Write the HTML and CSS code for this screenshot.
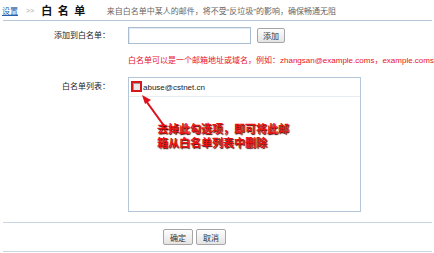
FILE: index.html
```html
<!DOCTYPE html>
<html lang="zh-CN">
<head>
    <meta charset="UTF-8">
    <title>白名单</title>
    <link rel="stylesheet" href="styles.css">
</head>
<body>
    <div class="crumb">
        <a href="#" class="crumb-link">设置</a>
        <span class="crumb-sep">&gt;&gt;</span>
        <h2 class="crumb-title">白名单</h2>
        <span class="crumb-desc">来自白名单中某人的邮件，将不受“反垃圾”的影响，确保畅通无阻</span>
    </div>

    <form class="wl-form">
        <label class="wl-label" for="addr">添加到白名单：</label>
        <div class="wl-field add-row">
            <input type="text" id="addr" class="wl-input">
            <button type="button" class="btn">添加</button>
        </div>

        <div class="wl-field hint">白名单可以是一个邮箱地址或域名，例如：zhangsan@example.coms，example.coms</div>

        <div class="wl-label list-label">白名单列表：</div>
        <div class="wl-field listbox">
            <div class="list-item">
                <span class="chk"></span>
                <span class="addr">abuse@cstnet.cn</span>
            </div>
            <span class="mark"></span>
            <svg class="arrow" width="40" height="50" viewBox="0 0 40 50">
                <line x1="27" y1="37" x2="6" y2="8" stroke="#5a0000" stroke-width="2" opacity="0.35" transform="translate(1 1)"/>
                <line x1="27" y1="37" x2="6" y2="8" stroke="#e0101a" stroke-width="1.8"/>
                <polygon points="2,2 11,7 5,11" fill="#e0101a"/>
            </svg>
            <p class="note">去掉此勾选项，即可将此邮<br>箱从白名单列表中删除</p>
        </div>
    </form>

    <div class="actions">
        <button type="button" class="btn">确定</button>
        <button type="button" class="btn">取消</button>
    </div>
</body>
</html>
```

FILE: styles.css
```css
body {
    margin: 0;
    background: #fff;
    font-family: "Liberation Sans", "Noto Sans CJK SC", sans-serif;
    font-size: 8px;
    color: #333;
}
.crumb {
    display: flex;
    align-items: center;
    height: 20px;
    margin: 0 2px 0 3px;
    border-bottom: 1px solid #b6c8d8;
    white-space: nowrap;
}
.crumb-link {
    color: #2560b0;
    text-decoration: underline;
    margin-left: -1px;
}
.crumb-sep {
    color: #9aa;
    margin-left: 8px;
    font-size: 7px;
}
.crumb-title {
    margin: 0 0 0 7px;
    font-size: 11px;
    font-weight: bold;
    letter-spacing: 5.5px;
    color: #111;
}
.crumb-desc {
    margin-left: 16px;
    color: #666;
}
.wl-form {
    display: grid;
    grid-template-columns: 110px 1fr;
    column-gap: 18px;
    padding-top: 6px;
}
.wl-label {
    text-align: right;
    color: #222;
    line-height: 12px;
}
.wl-label[for] {
    padding-top: 3px;
}
.list-label {
    padding-top: 4px;
    margin-top: 10px;
}
.wl-field {
    grid-column: 2;
}
.add-row {
    display: flex;
    align-items: center;
    gap: 6px;
}
.wl-input {
    box-sizing: border-box;
    width: 123px;
    height: 17px;
    margin: 0;
    border: 1px solid #a9bdd0;
    box-shadow: inset 1px 1px 1px #e4eaf0;
}
.btn {
    box-sizing: border-box;
    height: 15px;
    padding: 0 5px;
    margin: 0;
    border: 1px solid #a6a6a6;
    border-radius: 2px;
    background: linear-gradient(#fdfdfd, #e4e4e4);
    font-family: "Noto Sans CJK SC", sans-serif;
    font-size: 8px;
    line-height: 13px;
    color: #333;
}
.hint {
    margin-top: 11px;
    line-height: 12px;
    color: #e8121e;
    white-space: nowrap;
}
.listbox {
    position: relative;
    box-sizing: border-box;
    width: 233px;
    height: 135px;
    margin-top: 10px;
    border: 1px solid #b4c6d8;
}
.list-item {
    display: flex;
    align-items: center;
    height: 18px;
    padding-left: 4px;
    border-bottom: 1px solid #e6ecf1;
}
.chk {
    box-sizing: border-box;
    width: 8px;
    height: 8px;
    border: 1px solid #9a9a9a;
    background: #e9e9e9;
}
.addr {
    margin-left: 2px;
    color: #222;
}
.mark {
    position: absolute;
    left: 2px;
    top: 3px;
    width: 11px;
    height: 11px;
    box-sizing: border-box;
    border: 2px solid #d8141c;
}
.arrow {
    position: absolute;
    left: 11px;
    top: 15px;
}
.note {
    position: absolute;
    left: 28px;
    top: 44px;
    margin: 0;
    font-size: 11px;
    font-weight: bold;
    line-height: 14px;
    color: #ee1111;
    text-shadow: 1px 1px 1px #4a0000;
    white-space: nowrap;
}
.actions {
    display: flex;
    justify-content: flex-start;
    gap: 3px;
    margin: 10px 2px 0 3px;
    padding: 6px 0 6px 160px;
    border-top: 1px solid #c8d6e3;
    border-bottom: 1px solid #c8d6e3;
}
.actions .btn {
    height: 16px;
    padding: 0 6px;
}
```
